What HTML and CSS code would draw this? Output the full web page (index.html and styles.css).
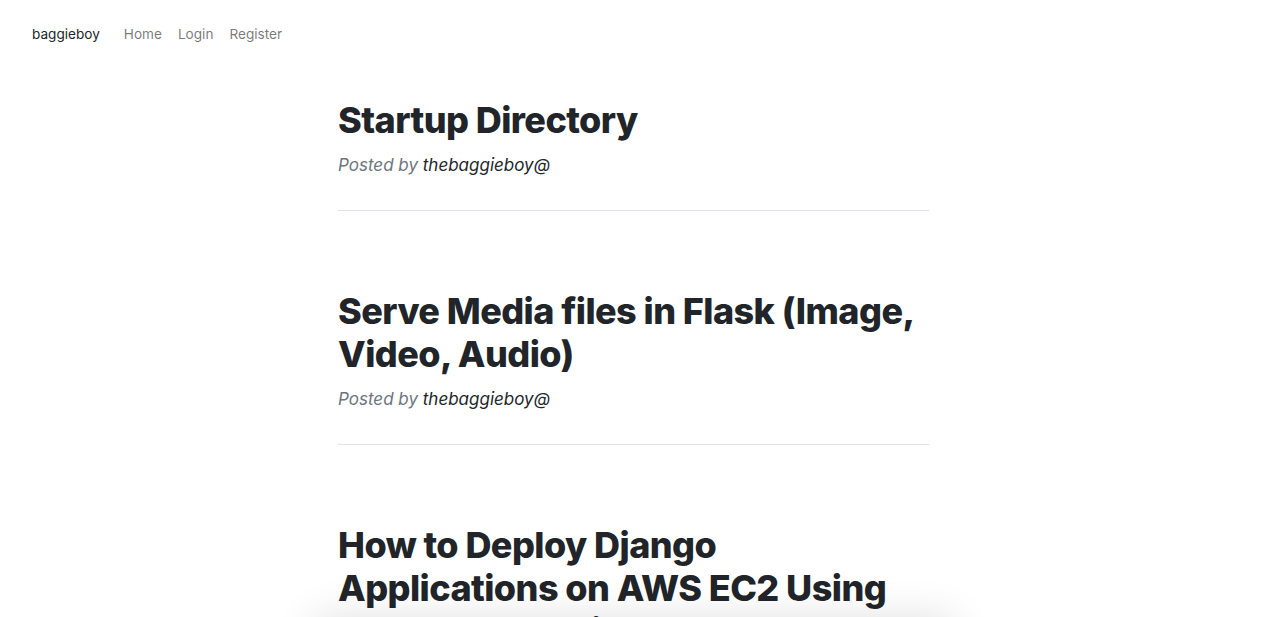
FILE: index.html
```html
<!DOCTYPE html>
<html lang="en">
<head>
<meta charset="utf-8">
<title>baggieboy</title>
<link rel="stylesheet" href="styles.css">
</head>
<body>
<nav class="navbar">
  <a class="brand" href="#">baggieboy</a>
  <ul class="nav-links">
    <li><a href="#">Home</a></li>
    <li><a href="#">Login</a></li>
    <li><a href="#">Register</a></li>
  </ul>
</nav>
<main class="container">
  <article class="post-preview">
    <h2 class="post-title">Startup Directory</h2>
    <p class="post-meta">Posted by <a href="#">thebaggieboy@</a></p>
  </article>
  <hr class="divider">
  <article class="post-preview">
    <h2 class="post-title">Serve Media files in Flask (Image, Video, Audio)</h2>
    <p class="post-meta">Posted by <a href="#">thebaggieboy@</a></p>
  </article>
  <hr class="divider">
  <article class="post-preview">
    <h2 class="post-title">How to Deploy Django Applications on AWS EC2 Using Docker and Nginx</h2>
    <p class="post-meta">Posted by <a href="#">thebaggieboy@</a></p>
  </article>
  <hr class="divider">
</main>
<div class="bottom-panel"></div>
</body>
</html>
```

FILE: styles.css
```css
html, body {
  margin: 0;
  padding: 0;
  background: #fff;
}
body {
  font-family: Inter, "Noto Sans", "Liberation Sans", sans-serif;
  color: #212529;
  overflow: hidden;
}
a {
  text-decoration: none;
  color: inherit;
}
.navbar {
  display: flex;
  align-items: center;
  height: 68px;
  padding: 0 32px;
  box-sizing: border-box;
  font-size: 13.6px;
}
.brand {
  color: #212529;
  margin-right: 16px;
}
.nav-links {
  display: flex;
  list-style: none;
  margin: 0;
  padding: 0;
}
.nav-links a {
  display: block;
  padding: 0 8px;
  color: rgba(0, 0, 0, 0.55);
}
.container {
  width: 591px;
  margin: 0 auto;
}
.post-preview {
  padding-top: 31px;
}
.divider + .post-preview {
  padding-top: 55px;
}
.post-title {
  font-size: 36px;
  line-height: 43px;
  font-weight: 800;
  margin: 0 0 10px;
  color: #212529;
  letter-spacing: -0.56px;
}
.post-meta {
  font-size: 17px;
  line-height: 27px;
  font-style: italic;
  color: #6c757d;
  margin: 0;
}
.post-meta a {
  color: #212529;
}
.divider {
  border: 0;
  border-top: 1px solid #dee2e6;
  margin: 31px 0 24px;
  height: 0;
}
.bottom-panel {
  position: fixed;
  left: 50%;
  top: 100%;
  width: 640px;
  height: 60px;
  transform: translateX(-50%);
  background: #fff;
  box-shadow: 0 0 40px rgba(0, 0, 0, 0.12);
}
```
